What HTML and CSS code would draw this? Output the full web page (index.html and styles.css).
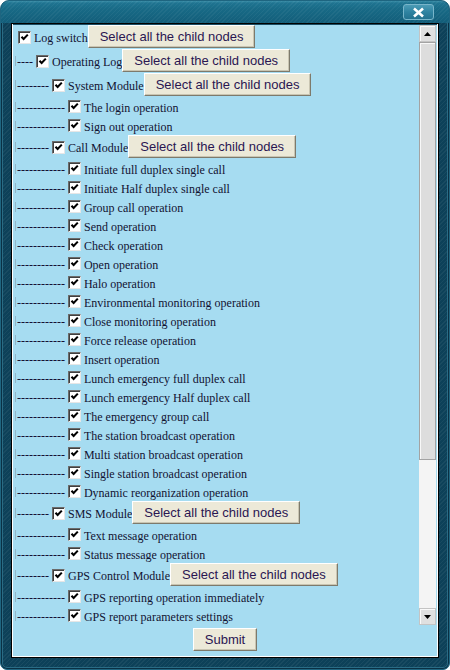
FILE: index.html
```html
<!DOCTYPE html>
<html>
<head>
<meta charset="utf-8">
<title>Log switch</title>
<link rel="stylesheet" href="styles.css">
</head>
<body>
<div class="window">
  <div class="titlebar">
    <span class="close"><svg width="13" height="11" viewBox="0 0 13 11"><path d="M2 1.5 L11 9.5 M11 1.5 L2 9.5" stroke="#fff" stroke-width="2.6" fill="none"/></svg></span>
  </div>
  <div class="panel">
    <div class="scrollwrap">
      <div class="list">
        <div class="row row-btn"><span class="cb"></span><span class="label">Log switch</span><button class="btn">Select all the child nodes</button></div>
        <div class="row row-btn"><span class="bar"></span><span class="dash">----</span><span class="cb"></span><span class="label">Operating Log</span><button class="btn">Select all the child nodes</button></div>
        <div class="row row-btn"><span class="bar"></span><span class="dash">--------</span><span class="cb"></span><span class="label">System Module</span><button class="btn">Select all the child nodes</button></div>
        <div class="row"><span class="bar"></span><span class="dash">------------</span><span class="cb"></span><span class="label">The login operation</span></div>
        <div class="row"><span class="bar"></span><span class="dash">------------</span><span class="cb"></span><span class="label">Sign out operation</span></div>
        <div class="row row-btn"><span class="bar"></span><span class="dash">--------</span><span class="cb"></span><span class="label">Call Module</span><button class="btn">Select all the child nodes</button></div>
        <div class="row"><span class="bar"></span><span class="dash">------------</span><span class="cb"></span><span class="label">Initiate full duplex single call</span></div>
        <div class="row"><span class="bar"></span><span class="dash">------------</span><span class="cb"></span><span class="label">Initiate Half duplex single call</span></div>
        <div class="row"><span class="bar"></span><span class="dash">------------</span><span class="cb"></span><span class="label">Group call operation</span></div>
        <div class="row"><span class="bar"></span><span class="dash">------------</span><span class="cb"></span><span class="label">Send operation</span></div>
        <div class="row"><span class="bar"></span><span class="dash">------------</span><span class="cb"></span><span class="label">Check operation</span></div>
        <div class="row"><span class="bar"></span><span class="dash">------------</span><span class="cb"></span><span class="label">Open operation</span></div>
        <div class="row"><span class="bar"></span><span class="dash">------------</span><span class="cb"></span><span class="label">Halo operation</span></div>
        <div class="row"><span class="bar"></span><span class="dash">------------</span><span class="cb"></span><span class="label">Environmental monitoring operation</span></div>
        <div class="row"><span class="bar"></span><span class="dash">------------</span><span class="cb"></span><span class="label">Close monitoring operation</span></div>
        <div class="row"><span class="bar"></span><span class="dash">------------</span><span class="cb"></span><span class="label">Force release operation</span></div>
        <div class="row"><span class="bar"></span><span class="dash">------------</span><span class="cb"></span><span class="label">Insert operation</span></div>
        <div class="row"><span class="bar"></span><span class="dash">------------</span><span class="cb"></span><span class="label">Lunch emergency full duplex call</span></div>
        <div class="row"><span class="bar"></span><span class="dash">------------</span><span class="cb"></span><span class="label">Lunch emergency Half duplex call</span></div>
        <div class="row"><span class="bar"></span><span class="dash">------------</span><span class="cb"></span><span class="label">The emergency group call</span></div>
        <div class="row"><span class="bar"></span><span class="dash">------------</span><span class="cb"></span><span class="label">The station broadcast operation</span></div>
        <div class="row"><span class="bar"></span><span class="dash">------------</span><span class="cb"></span><span class="label">Multi station broadcast operation</span></div>
        <div class="row"><span class="bar"></span><span class="dash">------------</span><span class="cb"></span><span class="label">Single station broadcast operation</span></div>
        <div class="row"><span class="bar"></span><span class="dash">------------</span><span class="cb"></span><span class="label">Dynamic reorganization operation</span></div>
        <div class="row row-btn"><span class="bar"></span><span class="dash">--------</span><span class="cb"></span><span class="label">SMS Module</span><button class="btn">Select all the child nodes</button></div>
        <div class="row"><span class="bar"></span><span class="dash">------------</span><span class="cb"></span><span class="label">Text message operation</span></div>
        <div class="row"><span class="bar"></span><span class="dash">------------</span><span class="cb"></span><span class="label">Status message operation</span></div>
        <div class="row row-btn"><span class="bar"></span><span class="dash">--------</span><span class="cb"></span><span class="label">GPS Control Module</span><button class="btn">Select all the child nodes</button></div>
        <div class="row"><span class="bar"></span><span class="dash">------------</span><span class="cb"></span><span class="label">GPS reporting operation immediately</span></div>
        <div class="row"><span class="bar"></span><span class="dash">------------</span><span class="cb"></span><span class="label">GPS report parameters settings</span></div>
      </div>
      <div class="scrollbar">
        <div class="sb-btn"><svg width="7" height="4" viewBox="0 0 7 4"><path d="M0 4 L3.5 0 L7 4 Z" fill="#000"/></svg></div>
        <div class="sb-track"><div class="sb-thumb"></div></div>
        <div class="sb-btn"><svg width="7" height="4" viewBox="0 0 7 4"><path d="M0 0 L7 0 L3.5 4 Z" fill="#000"/></svg></div>
      </div>
    </div>
    <div class="actions"><button class="btn">Submit</button></div>
  </div>
</div>
</body>
</html>
```
FILE: styles.css
```css
html, body {
  margin: 0;
  padding: 0;
  background: #ffffff;
}

.window {
  width: 450px;
  height: 670px;
  box-sizing: border-box;
  border-radius: 9px 9px 7px 7px;
  border: 1px solid #1e6580;
  padding: 0 10px 11px 10px;
  display: flex;
  flex-direction: column;
  background-color: #0d4159;
  background-image: repeating-linear-gradient(135deg, rgba(255,255,255,0.05) 0 1px, transparent 1px 3px);
  box-shadow: inset 0 0 0 1px #0a3044, inset 0 0 0 2px #2a6c85;
  overflow: hidden;
}

.titlebar {
  height: 22px;
  margin: 0 -10px;
  padding: 3px 15px 0 0;
  box-sizing: border-box;
  display: flex;
  justify-content: flex-end;
  align-items: flex-start;
  background-image:
    repeating-linear-gradient(135deg, rgba(255,255,255,0.045) 0 1px, transparent 1px 3px),
    linear-gradient(to bottom, #3b8ea8 0, #1f7491 2px, #186a86 8px, #135e7a 100%);
}

.close {
  width: 31px;
  height: 16px;
  box-sizing: border-box;
  border: 1px solid #78b5ca;
  border-radius: 3px;
  background: linear-gradient(to bottom, #4c9bb5 0, #2f83a1 50%, #23728f 100%);
  display: flex;
  align-items: center;
  justify-content: center;
}

.close svg { display: block; }

.panel {
  flex: 1;
  border: 1px solid #000;
  padding: 1px;
  background: #a6dcf1;
  box-shadow: inset 1px 0 #ffffff, inset -1px 0 #ffffff, inset 0 -1px #ffffff, inset 0 1px #1a4d63;
  display: flex;
  flex-direction: column;
}

.scrollwrap {
  height: 600px;
  display: flex;
}

.list {
  flex: 1;
  overflow: hidden;
  padding-left: 2px;
  font-family: "Liberation Serif", "Times New Roman", serif;
  font-size: 12px;
  color: #121232;
}

.row {
  height: 19px;
  display: flex;
  align-items: center;
  white-space: nowrap;
}

.row-btn {
  height: 24px;
}

.bar {
  width: 1px;
  height: 10px;
  background: #93b6c8;
  margin-right: 1px;
}

.dash {
  line-height: 15px;
  padding-top: 3px;
}

.cb {
  width: 13px;
  height: 13px;
  box-sizing: border-box;
  margin-left: 3px;
  flex: none;
  background-color: #ffffff;
  border: 1px solid;
  border-color: #6b6b6b #e6e6e6 #e6e6e6 #6b6b6b;
  box-shadow: inset 1px 1px #404040;
  background-image: url("data:image/svg+xml,%3Csvg xmlns='http://www.w3.org/2000/svg' width='11' height='11' viewBox='0 0 11 11'%3E%3Cpath d='M2.5 4.8 L4.6 7 L8.8 2.6' stroke='%23000' stroke-width='2.1' fill='none'/%3E%3C/svg%3E");
  background-repeat: no-repeat;
  background-position: 0 0;
}

.label {
  margin-left: 3px;
  line-height: 15px;
  padding-top: 3px;
}

.btn {
  height: 23px;
  margin: 0 0 1px 0;
  padding: 0 11px;
  box-sizing: border-box;
  font-family: "Liberation Sans", Arial, sans-serif;
  font-size: 13px;
  color: #2a1652;
  background: #ece9d8;
  border: 1px solid;
  border-color: #ffffff #7d7a6c #7d7a6c #ffffff;
  box-shadow: inset -1px -1px #c9c5b2;
  line-height: 20px;
}

.scrollbar {
  width: 17px;
  flex: none;
  display: flex;
  flex-direction: column;
  background: #f3f3f3;
  margin-right: 1px;
}

.sb-btn {
  height: 17px;
  box-sizing: border-box;
  border: 1px solid #c4c4c4;
  background: #e0e0e0;
  box-shadow: inset 1px 1px #fafafa;
  display: flex;
  align-items: center;
  justify-content: center;
}

.sb-btn svg { display: block; }

.sb-track {
  flex: 1;
  background: #f4f4f4;
}

.sb-thumb {
  height: 418px;
  box-sizing: border-box;
  border: 1px solid #a3a3a3;
  background: #dddddd;
  box-shadow: inset 1px 1px #f8f8f8;
}

.actions {
  flex: 1;
  display: flex;
  justify-content: center;
  align-items: flex-start;
  padding-top: 3px;
}

.actions .btn {
  margin: 0;
}
```
